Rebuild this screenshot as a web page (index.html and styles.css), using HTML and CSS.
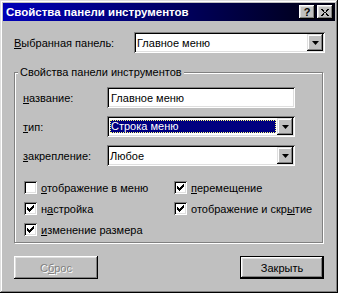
FILE: index.html
```html
<!DOCTYPE html>
<html lang="ru">
  <head>
    <meta charset="UTF-8" />
    <title>Свойства панели инструментов</title>
    <link rel="stylesheet" href="styles.css">
  </head>
  <body>
    <div class="window">
      <div class="titlebar">
        <span class="title">Свойства панели инструментов</span>
        <div class="caption-buttons">
          <span class="cap-btn">?</span>
          <span class="cap-btn close">
            <svg width="8" height="7" viewBox="0 0 8 7" shape-rendering="crispEdges">
              <path d="M0 0h2v1h-2z M1 1h2v1h-2z M2 2h1v1h-1z M5 2h1v1h-1z M3 3h2v1h-2z M2 4h1v1h-1z M5 4h1v1h-1z M1 5h2v1h-2z M5 5h2v1h-2z M0 6h2v1h-2z M6 6h2v1h-2z M6 0h2v1h-2z M5 1h2v1h-2z" fill="#000"/>
            </svg>
          </span>
        </div>
      </div>

      <div class="content">
        <div class="top-row">
          <span class="label"><u>В</u>ыбранная панель:</span>
          <div class="combo wide">
            <span class="value">Главное меню</span>
            <span class="drop"><svg width="7" height="4" viewBox="0 0 7 4"><path d="M0 0h7l-3.5 4z" fill="#000"/></svg></span>
          </div>
        </div>

        <fieldset class="group">
          <legend>Свойства панели инструментов</legend>

          <div class="fields">
            <span class="label"><u>н</u>азвание:</span>
            <div class="textbox">Главное меню</div>

            <span class="label"><u>т</u>ип:</span>
            <div class="combo">
              <span class="value selected">Строка меню</span>
              <span class="drop"><svg width="7" height="4" viewBox="0 0 7 4"><path d="M0 0h7l-3.5 4z" fill="#000"/></svg></span>
            </div>

            <span class="label"><u>з</u>акрепление:</span>
            <div class="combo">
              <span class="value">Любое</span>
              <span class="drop"><svg width="7" height="4" viewBox="0 0 7 4"><path d="M0 0h7l-3.5 4z" fill="#000"/></svg></span>
            </div>
          </div>

          <div class="checks">
            <div class="check">
              <span class="box"></span>
              <span><u>о</u>тображение в меню</span>
            </div>
            <div class="check">
              <span class="box checked"><svg width="7" height="7" viewBox="0 0 7 7" shape-rendering="crispEdges"><path d="M0 2h1v3h-1z M1 3h1v3h-1z M2 4h1v3h-1z M3 3h1v3h-1z M4 2h1v3h-1z M5 1h1v3h-1z M6 0h1v3h-1z" fill="#000"/></svg></span>
              <span><u>п</u>еремещение</span>
            </div>
            <div class="check">
              <span class="box checked"><svg width="7" height="7" viewBox="0 0 7 7" shape-rendering="crispEdges"><path d="M0 2h1v3h-1z M1 3h1v3h-1z M2 4h1v3h-1z M3 3h1v3h-1z M4 2h1v3h-1z M5 1h1v3h-1z M6 0h1v3h-1z" fill="#000"/></svg></span>
              <span>н<u>а</u>стройка</span>
            </div>
            <div class="check">
              <span class="box checked"><svg width="7" height="7" viewBox="0 0 7 7" shape-rendering="crispEdges"><path d="M0 2h1v3h-1z M1 3h1v3h-1z M2 4h1v3h-1z M3 3h1v3h-1z M4 2h1v3h-1z M5 1h1v3h-1z M6 0h1v3h-1z" fill="#000"/></svg></span>
              <span>отображение и скр<u>ы</u>тие</span>
            </div>
            <div class="check">
              <span class="box checked"><svg width="7" height="7" viewBox="0 0 7 7" shape-rendering="crispEdges"><path d="M0 2h1v3h-1z M1 3h1v3h-1z M2 4h1v3h-1z M3 3h1v3h-1z M4 2h1v3h-1z M5 1h1v3h-1z M6 0h1v3h-1z" fill="#000"/></svg></span>
              <span><u>и</u>зменение размера</span>
            </div>
          </div>
        </fieldset>

        <div class="buttons">
          <button class="btn" disabled>С<u>б</u>рос</button>
          <button class="btn default">Закрыть</button>
        </div>
      </div>
    </div>
  </body>
</html>
```

FILE: styles.css
```css
html,
body {
  margin: 0;
  padding: 0;
  background-color: #c0c0c0;
}

body {
  font-family: "Liberation Sans", Arial, sans-serif;
  font-size: 11px;
  color: #000;
}

u {
  text-decoration: underline;
  text-underline-offset: 1px;
}

.window {
  box-sizing: border-box;
  width: 338px;
  height: 293px;
  padding: 3px;
  background-color: #c0c0c0;
  box-shadow: inset -1px -1px #000, inset 1px 1px #dfdfdf,
    inset -2px -2px #808080, inset 2px 2px #fff;
}

.titlebar {
  height: 18px;
  display: flex;
  align-items: center;
  justify-content: space-between;
  padding: 0 2px 0 3px;
  background: linear-gradient(to right, #0000b8, #000010);
}

.title {
  color: #fff;
  font-weight: bold;
  font-size: 11.5px;
  line-height: 18px;
}

.caption-buttons {
  display: flex;
  gap: 2px;
}

.cap-btn {
  box-sizing: border-box;
  width: 16px;
  height: 14px;
  display: flex;
  align-items: center;
  justify-content: center;
  background-color: #c0c0c0;
  font-weight: bold;
  font-size: 11px;
  line-height: 14px;
  box-shadow: inset -1px -1px #000, inset 1px 1px #fff,
    inset -2px -2px #808080, inset 2px 2px #dfdfdf;
}

.content {
  padding: 11px 10px 0 11px;
}

.top-row {
  display: flex;
  align-items: center;
}

.top-row .label {
  width: 120px;
}

.combo,
.textbox {
  box-sizing: border-box;
  height: 21px;
  display: flex;
  align-items: center;
  padding: 2px;
  background-color: #fff;
  box-shadow: inset 1px 1px #808080, inset -1px -1px #fff,
    inset 2px 2px #000, inset -2px -2px #dfdfdf;
}

.combo.wide {
  width: 191px;
}

.combo .value {
  flex: 1;
  padding-left: 1px;
}

.combo .value.selected {
  margin: 1px 1px 1px 1px;
  padding: 0 0 0 1px;
  line-height: 13px;
  color: #fff;
  background-color: #000080;
  outline: 1px dotted #ffff80;
  outline-offset: -1px;
}

.drop {
  box-sizing: border-box;
  width: 16px;
  height: 17px;
  display: flex;
  align-items: center;
  justify-content: center;
  background-color: #c0c0c0;
  box-shadow: inset -1px -1px #000, inset 1px 1px #dfdfdf,
    inset -2px -2px #808080, inset 2px 2px #fff;
}

.textbox {
  padding-left: 4px;
}

.group {
  box-sizing: border-box;
  width: 309px;
  margin: 13px 0 0 0;
  padding: 8px 8px 6px 8px;
  border: 1px solid #808080;
  box-shadow: inset 1px 1px #fff, 1px 1px #fff;
}

.group legend {
  margin-left: -5px;
  padding: 0 2px;
  line-height: 13px;
  background-color: #c0c0c0;
}

.fields {
  display: grid;
  grid-template-columns: 84px 188px;
  row-gap: 8px;
  align-items: center;
}

.checks {
  display: grid;
  grid-template-columns: 150px 1fr;
  row-gap: 8px;
  margin-top: 15px;
  padding-left: 1px;
}

.check {
  display: flex;
  align-items: center;
  gap: 4px;
  height: 13px;
}

.box {
  box-sizing: border-box;
  width: 13px;
  height: 13px;
  display: flex;
  align-items: center;
  justify-content: center;
  background-color: #fff;
  box-shadow: inset 1px 1px #808080, inset -1px -1px #fff,
    inset 2px 2px #000, inset -2px -2px #dfdfdf;
}

.buttons {
  display: flex;
  justify-content: space-between;
  margin-top: 13px;
  width: 310px;
}

.btn {
  box-sizing: border-box;
  width: 84px;
  height: 23px;
  padding: 0;
  border: none;
  font-family: inherit;
  font-size: 11px;
  color: #000;
  background-color: #c0c0c0;
  box-shadow: inset -1px -1px #000, inset 1px 1px #fff,
    inset -2px -2px #808080, inset 2px 2px #dfdfdf;
}

.btn:disabled {
  color: #808080;
  text-shadow: 1px 1px #fff;
}

.btn.default {
  border: 1px solid #000;
  box-shadow: inset -1px -1px #000, inset 1px 1px #fff,
    inset -2px -2px #808080, inset 2px 2px #dfdfdf;
}
```
